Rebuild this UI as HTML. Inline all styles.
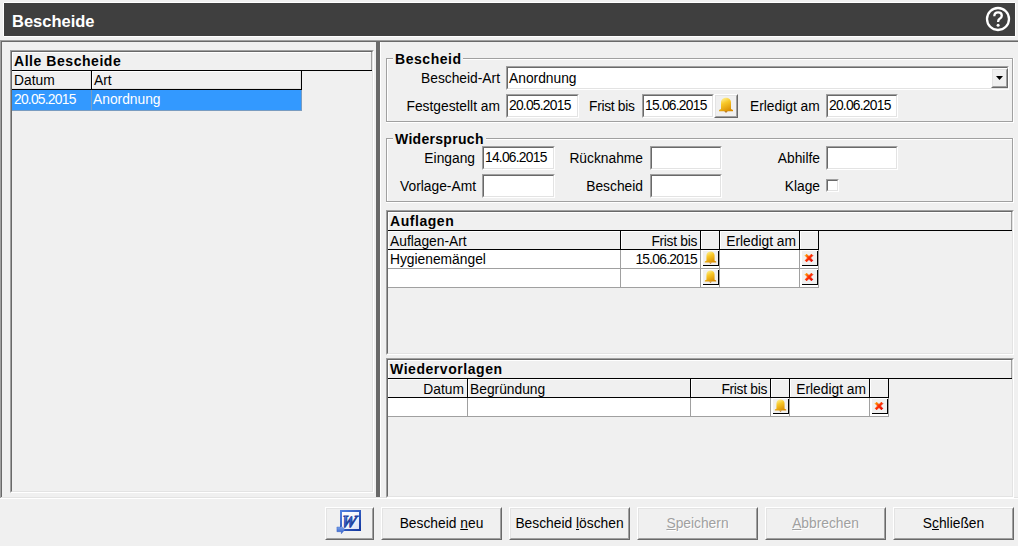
<!DOCTYPE html><html><head><meta charset="utf-8"><style>
*{box-sizing:border-box;margin:0;padding:0}
html,body{width:1018px;height:546px;overflow:hidden;background:#f0f0f0;font-family:"Liberation Sans",sans-serif;font-size:13.8px;color:#000;position:relative}
.a{position:absolute}
.t{position:absolute;white-space:nowrap;line-height:15px}
.b{font-weight:bold;font-size:14px;letter-spacing:0.55px}
.d{letter-spacing:-0.75px}
.sk{position:absolute;border-style:solid;border-width:1px;border-color:#a0a0a0 #fff #fff #a0a0a0}
.sk>i{position:absolute;left:0;top:0;right:0;bottom:0;border-style:solid;border-width:1px;border-color:#696969 #e3e3e3 #e3e3e3 #696969}
.rs{position:absolute;border-style:solid;border-width:1px;border-color:#fff #696969 #696969 #fff}
.rs>i{position:absolute;left:0;top:0;right:0;bottom:0;border-style:solid;border-width:1px;border-color:#e3e3e3 #a0a0a0 #a0a0a0 #e3e3e3}
.dis{color:#a0a0a0;text-shadow:1px 1px 0 #fff}
u{text-decoration:underline;text-underline-offset:0.5px;text-decoration-thickness:1px}
</style></head><body>
<div class="a" style="left:4px;top:2px;width:1011px;height:35px;background:#fff;"></div>
<div class="a" style="left:3px;top:3px;width:1013px;height:33px;background:#fff;"></div>
<div class="a" style="left:4px;top:3px;width:1011px;height:33px;background:#3f3f3f;"></div>
<div class="t " style="left:12px;top:11px;font-weight:bold;font-size:16.5px;line-height:20px;color:#fff">Bescheide</div>
<svg class="a" style="left:984px;top:5px" width="28" height="28" viewBox="0 0 28 28"><circle cx="14" cy="14" r="11" fill="none" stroke="#fff" stroke-width="2.3"/><path d="M10.3 11.2C10.3 8.6 12 7.4 14.1 7.4C16.3 7.4 17.8 8.8 17.8 10.7C17.8 12.5 16.6 13.2 15.4 14C14.4 14.7 14.1 15.3 14.1 17" fill="none" stroke="#fff" stroke-width="2.3"/><circle cx="14.1" cy="20.2" r="1.5" fill="#fff"/></svg>
<div class="a" style="left:0px;top:40px;width:1018px;height:1px;background:#a0a0a0;"></div>
<div class="a" style="left:0px;top:40px;width:1px;height:458px;background:#a0a0a0;"></div>
<div class="a" style="left:1px;top:41px;width:1017px;height:1px;background:#696969;"></div>
<div class="a" style="left:1px;top:41px;width:1px;height:456px;background:#696969;"></div>
<div class="a" style="left:0px;top:498px;width:1018px;height:1px;background:#fff;"></div>
<div class="a" style="left:1px;top:497px;width:1017px;height:1px;background:#e3e3e3;"></div>
<div class="a" style="left:376px;top:42px;width:4px;height:455px;background:#696969;"></div>
<div class="a" style="left:380px;top:42px;width:1px;height:455px;background:#fff;"></div>
<div class="sk" style="left:10px;top:50px;width:364px;height:443px;background:#f0f0f0"><i></i></div>
<div class="a" style="left:12px;top:52px;width:360px;height:1px;background:#fff;"></div>
<div class="a" style="left:12px;top:52px;width:1px;height:18px;background:#fff;"></div>
<div class="a" style="left:371px;top:52px;width:1px;height:18px;background:#a0a0a0;"></div>
<div class="t b" style="left:14px;top:54px;">Alle Bescheide</div>
<div class="a" style="left:12px;top:70px;width:360px;height:1px;background:#000;"></div>
<div class="a" style="left:12px;top:71px;width:290px;height:18px;background:#f0f0f0;"></div>
<div class="a" style="left:12px;top:71px;width:289px;height:1px;background:#fff;"></div>
<div class="a" style="left:92px;top:71px;width:1px;height:18px;background:#fff;"></div>
<div class="a" style="left:12px;top:88px;width:289px;height:1px;background:#e3e3e3;"></div>
<div class="a" style="left:90px;top:71px;width:1px;height:18px;background:#e3e3e3;"></div>
<div class="a" style="left:300px;top:71px;width:1px;height:18px;background:#e3e3e3;"></div>
<div class="a" style="left:12px;top:89px;width:290px;height:1px;background:#000;"></div>
<div class="a" style="left:91px;top:71px;width:1px;height:19px;background:#000;"></div>
<div class="a" style="left:301px;top:71px;width:1px;height:19px;background:#000;"></div>
<div class="t " style="left:14px;top:73px;">Datum</div>
<div class="t " style="left:94px;top:73px;">Art</div>
<div class="a" style="left:12px;top:90px;width:290px;height:21px;background:#3399ff;"></div>
<div class="a" style="left:91px;top:90px;width:1px;height:21px;background:#7a9cc0;"></div>
<div class="a" style="left:301px;top:90px;width:1px;height:21px;background:#7a9cc0;"></div>
<div class="a" style="left:12px;top:110px;width:290px;height:1px;background:#7a9cc0;"></div>
<div class="t d" style="left:14px;top:92px;color:#fff">20.05.2015</div>
<div class="t " style="left:93px;top:92px;color:#fff">Anordnung</div>
<div class="a" style="left:387px;top:59px;width:627px;height:1px;background:#fff;"></div>
<div class="a" style="left:387px;top:59px;width:1px;height:64px;background:#fff;"></div>
<div class="a" style="left:1013px;top:58px;width:1px;height:65px;background:#fff;"></div>
<div class="a" style="left:386px;top:122px;width:628px;height:1px;background:#fff;"></div>
<div class="a" style="left:386px;top:58px;width:627px;height:1px;background:#a0a0a0;"></div>
<div class="a" style="left:386px;top:58px;width:1px;height:64px;background:#a0a0a0;"></div>
<div class="a" style="left:1012px;top:58px;width:1px;height:64px;background:#a0a0a0;"></div>
<div class="a" style="left:386px;top:121px;width:627px;height:1px;background:#a0a0a0;"></div>
<div class="a" style="left:393px;top:58px;width:70px;height:2px;background:#f0f0f0;"></div>
<div class="t b" style="left:395px;top:52px;">Bescheid</div>
<div class="t " style="right:518px;top:71px;text-align:right;">Bescheid-Art</div>
<div class="sk" style="left:506px;top:66px;width:503px;height:24px;background:#fff"><i></i></div>
<div class="t " style="left:509px;top:71px;">Anordnung</div>
<div class="rs" style="left:991px;top:68px;width:17px;height:20px;background:#f0f0f0"><i></i></div>
<svg class="a" style="left:995px;top:75px" width="9" height="6"><path d="M1 1H8L4.5 5Z" fill="#000"/></svg>
<div class="t " style="right:518px;top:99px;text-align:right;">Festgestellt am</div>
<div class="sk" style="left:506px;top:94px;width:73px;height:24px;background:#fff"><i></i></div>
<div class="t d" style="left:509px;top:98px;">20.05.2015</div>
<div class="t " style="left:589px;top:99px;letter-spacing:-0.3px">Frist bis</div>
<div class="sk" style="left:642px;top:94px;width:72px;height:24px;background:#fff"><i></i></div>
<div class="t d" style="left:645px;top:98px;">15.06.2015</div>
<div class="rs" style="left:714px;top:94px;width:24px;height:24px;background:#f0f0f0"><i></i></div>
<svg class="a" style="left:718px;top:97px" width="16" height="16" viewBox="0 0 16 16"><defs><linearGradient id="bg0" x1="0.2" y1="0" x2="0.7" y2="1"><stop offset="0" stop-color="#fff4a0"/><stop offset="0.4" stop-color="#f8c828"/><stop offset="1" stop-color="#d98c00"/></linearGradient></defs><path d="M6.2 14H9.8L8 16Z" fill="#b87a30"/><path d="M3 12V5.6C3 2.6 5.2 0.7 8 0.7C10.8 0.7 13 2.6 13 5.6V12L15 12.9V14.2H1V12.9Z" fill="url(#bg0)"/></svg>
<div class="t " style="left:750px;top:99px;">Erledigt am</div>
<div class="sk" style="left:826px;top:94px;width:72px;height:24px;background:#fff"><i></i></div>
<div class="t d" style="left:829px;top:98px;">20.06.2015</div>
<div class="a" style="left:387px;top:139px;width:627px;height:1px;background:#fff;"></div>
<div class="a" style="left:387px;top:139px;width:1px;height:64px;background:#fff;"></div>
<div class="a" style="left:1013px;top:138px;width:1px;height:65px;background:#fff;"></div>
<div class="a" style="left:386px;top:202px;width:628px;height:1px;background:#fff;"></div>
<div class="a" style="left:386px;top:138px;width:627px;height:1px;background:#a0a0a0;"></div>
<div class="a" style="left:386px;top:138px;width:1px;height:64px;background:#a0a0a0;"></div>
<div class="a" style="left:1012px;top:138px;width:1px;height:64px;background:#a0a0a0;"></div>
<div class="a" style="left:386px;top:201px;width:627px;height:1px;background:#a0a0a0;"></div>
<div class="a" style="left:393px;top:138px;width:93px;height:2px;background:#f0f0f0;"></div>
<div class="t b" style="left:395px;top:132px;letter-spacing:0.3px">Widerspruch</div>
<div class="t " style="right:543px;top:151px;text-align:right;">Eingang</div>
<div class="sk" style="left:482px;top:146px;width:73px;height:24px;background:#fff"><i></i></div>
<div class="t d" style="left:485px;top:150px;">14.06.2015</div>
<div class="t " style="right:375px;top:151px;text-align:right;">Rücknahme</div>
<div class="sk" style="left:650px;top:146px;width:72px;height:24px;background:#fff"><i></i></div>
<div class="t " style="right:198px;top:151px;text-align:right;">Abhilfe</div>
<div class="sk" style="left:826px;top:146px;width:72px;height:24px;background:#fff"><i></i></div>
<div class="t " style="right:542px;top:179px;text-align:right;">Vorlage-Amt</div>
<div class="sk" style="left:482px;top:174px;width:73px;height:24px;background:#fff"><i></i></div>
<div class="t " style="right:375px;top:179px;text-align:right;">Bescheid</div>
<div class="sk" style="left:650px;top:174px;width:72px;height:24px;background:#fff"><i></i></div>
<div class="t " style="right:198px;top:179px;text-align:right;">Klage</div>
<div class="sk" style="left:826px;top:179px;width:13px;height:13px;background:#fff"><i></i></div>
<div class="sk" style="left:386px;top:210px;width:628px;height:145px;background:#f0f0f0"><i></i></div>
<div class="a" style="left:388px;top:212px;width:624px;height:1px;background:#fff;"></div>
<div class="a" style="left:388px;top:212px;width:1px;height:18px;background:#fff;"></div>
<div class="a" style="left:1011px;top:212px;width:1px;height:18px;background:#a0a0a0;"></div>
<div class="t b" style="left:390px;top:214px;">Auflagen</div>
<div class="a" style="left:388px;top:230px;width:624px;height:1px;background:#000;"></div>
<div class="a" style="left:388px;top:231px;width:232px;height:18px;background:#f0f0f0;"></div>
<div class="a" style="left:388px;top:231px;width:232px;height:1px;background:#fff;"></div>
<div class="a" style="left:388px;top:231px;width:1px;height:18px;background:#fff;"></div>
<div class="a" style="left:621px;top:231px;width:79px;height:18px;background:#f0f0f0;"></div>
<div class="a" style="left:621px;top:231px;width:79px;height:1px;background:#fff;"></div>
<div class="a" style="left:621px;top:231px;width:1px;height:18px;background:#fff;"></div>
<div class="a" style="left:701px;top:231px;width:18px;height:18px;background:#f0f0f0;"></div>
<div class="a" style="left:701px;top:231px;width:18px;height:1px;background:#fff;"></div>
<div class="a" style="left:701px;top:231px;width:1px;height:18px;background:#fff;"></div>
<div class="a" style="left:720px;top:231px;width:79px;height:18px;background:#f0f0f0;"></div>
<div class="a" style="left:720px;top:231px;width:79px;height:1px;background:#fff;"></div>
<div class="a" style="left:720px;top:231px;width:1px;height:18px;background:#fff;"></div>
<div class="a" style="left:800px;top:231px;width:18px;height:18px;background:#f0f0f0;"></div>
<div class="a" style="left:800px;top:231px;width:18px;height:1px;background:#fff;"></div>
<div class="a" style="left:800px;top:231px;width:1px;height:18px;background:#fff;"></div>
<div class="a" style="left:620px;top:231px;width:1px;height:19px;background:#000;"></div>
<div class="t " style="left:390px;top:234px;">Auflagen-Art</div>
<div class="a" style="left:700px;top:231px;width:1px;height:19px;background:#000;"></div>
<div class="t " style="right:321px;top:234px;text-align:right;letter-spacing:-0.3px">Frist bis</div>
<div class="a" style="left:719px;top:231px;width:1px;height:19px;background:#000;"></div>
<div class="a" style="left:799px;top:231px;width:1px;height:19px;background:#000;"></div>
<div class="t " style="right:222px;top:234px;text-align:right;">Erledigt am</div>
<div class="a" style="left:818px;top:231px;width:1px;height:19px;background:#000;"></div>
<div class="a" style="left:388px;top:249px;width:431px;height:1px;background:#000;"></div>
<div class="a" style="left:388px;top:250px;width:430px;height:18px;background:#fff;"></div>
<div class="a" style="left:620px;top:250px;width:1px;height:19px;background:#a0a0a0;"></div>
<div class="t " style="left:390px;top:252px;">Hygienemängel</div>
<div class="a" style="left:700px;top:250px;width:1px;height:19px;background:#a0a0a0;"></div>
<div class="t d" style="right:321px;top:252px;text-align:right;">15.06.2015</div>
<div class="a" style="left:719px;top:250px;width:1px;height:19px;background:#a0a0a0;"></div>
<div class="a" style="left:703px;top:251px;width:16px;height:15px;background:#f0f0f0;"></div>
<div class="a" style="left:718px;top:251px;width:1px;height:15px;background:#000;"></div>
<div class="a" style="left:703px;top:265px;width:16px;height:1px;background:#000;"></div>
<svg class="a" style="left:704px;top:251px" width="13" height="13" viewBox="0 0 16 16"><defs><linearGradient id="bg1" x1="0.2" y1="0" x2="0.7" y2="1"><stop offset="0" stop-color="#fff4a0"/><stop offset="0.4" stop-color="#f8c828"/><stop offset="1" stop-color="#d98c00"/></linearGradient></defs><path d="M6.2 14H9.8L8 16Z" fill="#b87a30"/><path d="M3 12V5.6C3 2.6 5.2 0.7 8 0.7C10.8 0.7 13 2.6 13 5.6V12L15 12.9V14.2H1V12.9Z" fill="url(#bg1)"/></svg>
<div class="a" style="left:799px;top:250px;width:1px;height:19px;background:#a0a0a0;"></div>
<div class="a" style="left:818px;top:250px;width:1px;height:19px;background:#a0a0a0;"></div>
<div class="a" style="left:802px;top:251px;width:16px;height:15px;background:#f0f0f0;"></div>
<div class="a" style="left:817px;top:251px;width:1px;height:15px;background:#000;"></div>
<div class="a" style="left:802px;top:265px;width:16px;height:1px;background:#000;"></div>
<svg class="a" style="left:804px;top:253px" width="10" height="10" viewBox="0 0 10 10"><defs><linearGradient id="xg2" x1="0" y1="0" x2="1" y2="1"><stop offset="0" stop-color="#ffb000"/><stop offset="0.45" stop-color="#ff3000"/><stop offset="1" stop-color="#e00000"/></linearGradient></defs><path d="M1.2 2.6L2.6 1.2L5 3.6L7.4 1.2L8.8 2.6L6.4 5L8.8 7.4L7.4 8.8L5 6.4L2.6 8.8L1.2 7.4L3.6 5Z" fill="url(#xg2)" stroke="url(#xg2)" stroke-width="0.9" stroke-linejoin="round"/></svg>
<div class="a" style="left:388px;top:268px;width:431px;height:1px;background:#a0a0a0;"></div>
<div class="a" style="left:388px;top:269px;width:430px;height:18px;background:#fff;"></div>
<div class="a" style="left:620px;top:269px;width:1px;height:19px;background:#a0a0a0;"></div>
<div class="a" style="left:700px;top:269px;width:1px;height:19px;background:#a0a0a0;"></div>
<div class="a" style="left:719px;top:269px;width:1px;height:19px;background:#a0a0a0;"></div>
<div class="a" style="left:703px;top:270px;width:16px;height:15px;background:#f0f0f0;"></div>
<div class="a" style="left:718px;top:270px;width:1px;height:15px;background:#000;"></div>
<div class="a" style="left:703px;top:284px;width:16px;height:1px;background:#000;"></div>
<svg class="a" style="left:704px;top:270px" width="13" height="13" viewBox="0 0 16 16"><defs><linearGradient id="bg3" x1="0.2" y1="0" x2="0.7" y2="1"><stop offset="0" stop-color="#fff4a0"/><stop offset="0.4" stop-color="#f8c828"/><stop offset="1" stop-color="#d98c00"/></linearGradient></defs><path d="M6.2 14H9.8L8 16Z" fill="#b87a30"/><path d="M3 12V5.6C3 2.6 5.2 0.7 8 0.7C10.8 0.7 13 2.6 13 5.6V12L15 12.9V14.2H1V12.9Z" fill="url(#bg3)"/></svg>
<div class="a" style="left:799px;top:269px;width:1px;height:19px;background:#a0a0a0;"></div>
<div class="a" style="left:818px;top:269px;width:1px;height:19px;background:#a0a0a0;"></div>
<div class="a" style="left:802px;top:270px;width:16px;height:15px;background:#f0f0f0;"></div>
<div class="a" style="left:817px;top:270px;width:1px;height:15px;background:#000;"></div>
<div class="a" style="left:802px;top:284px;width:16px;height:1px;background:#000;"></div>
<svg class="a" style="left:804px;top:272px" width="10" height="10" viewBox="0 0 10 10"><defs><linearGradient id="xg4" x1="0" y1="0" x2="1" y2="1"><stop offset="0" stop-color="#ffb000"/><stop offset="0.45" stop-color="#ff3000"/><stop offset="1" stop-color="#e00000"/></linearGradient></defs><path d="M1.2 2.6L2.6 1.2L5 3.6L7.4 1.2L8.8 2.6L6.4 5L8.8 7.4L7.4 8.8L5 6.4L2.6 8.8L1.2 7.4L3.6 5Z" fill="url(#xg4)" stroke="url(#xg4)" stroke-width="0.9" stroke-linejoin="round"/></svg>
<div class="a" style="left:388px;top:287px;width:431px;height:1px;background:#a0a0a0;"></div>
<div class="sk" style="left:386px;top:358px;width:628px;height:140px;background:#f0f0f0"><i></i></div>
<div class="a" style="left:388px;top:360px;width:624px;height:1px;background:#fff;"></div>
<div class="a" style="left:388px;top:360px;width:1px;height:18px;background:#fff;"></div>
<div class="a" style="left:1011px;top:360px;width:1px;height:18px;background:#a0a0a0;"></div>
<div class="t b" style="left:390px;top:362px;">Wiedervorlagen</div>
<div class="a" style="left:388px;top:378px;width:624px;height:1px;background:#000;"></div>
<div class="a" style="left:388px;top:379px;width:79px;height:18px;background:#f0f0f0;"></div>
<div class="a" style="left:388px;top:379px;width:79px;height:1px;background:#fff;"></div>
<div class="a" style="left:388px;top:379px;width:1px;height:18px;background:#fff;"></div>
<div class="a" style="left:468px;top:379px;width:222px;height:18px;background:#f0f0f0;"></div>
<div class="a" style="left:468px;top:379px;width:222px;height:1px;background:#fff;"></div>
<div class="a" style="left:468px;top:379px;width:1px;height:18px;background:#fff;"></div>
<div class="a" style="left:691px;top:379px;width:79px;height:18px;background:#f0f0f0;"></div>
<div class="a" style="left:691px;top:379px;width:79px;height:1px;background:#fff;"></div>
<div class="a" style="left:691px;top:379px;width:1px;height:18px;background:#fff;"></div>
<div class="a" style="left:771px;top:379px;width:18px;height:18px;background:#f0f0f0;"></div>
<div class="a" style="left:771px;top:379px;width:18px;height:1px;background:#fff;"></div>
<div class="a" style="left:771px;top:379px;width:1px;height:18px;background:#fff;"></div>
<div class="a" style="left:790px;top:379px;width:79px;height:18px;background:#f0f0f0;"></div>
<div class="a" style="left:790px;top:379px;width:79px;height:1px;background:#fff;"></div>
<div class="a" style="left:790px;top:379px;width:1px;height:18px;background:#fff;"></div>
<div class="a" style="left:870px;top:379px;width:18px;height:18px;background:#f0f0f0;"></div>
<div class="a" style="left:870px;top:379px;width:18px;height:1px;background:#fff;"></div>
<div class="a" style="left:870px;top:379px;width:1px;height:18px;background:#fff;"></div>
<div class="a" style="left:467px;top:379px;width:1px;height:19px;background:#000;"></div>
<div class="t " style="right:554px;top:382px;text-align:right;">Datum</div>
<div class="a" style="left:690px;top:379px;width:1px;height:19px;background:#000;"></div>
<div class="t " style="left:470px;top:382px;">Begründung</div>
<div class="a" style="left:770px;top:379px;width:1px;height:19px;background:#000;"></div>
<div class="t " style="right:251px;top:382px;text-align:right;letter-spacing:-0.3px">Frist bis</div>
<div class="a" style="left:789px;top:379px;width:1px;height:19px;background:#000;"></div>
<div class="a" style="left:869px;top:379px;width:1px;height:19px;background:#000;"></div>
<div class="t " style="right:152px;top:382px;text-align:right;">Erledigt am</div>
<div class="a" style="left:888px;top:379px;width:1px;height:19px;background:#000;"></div>
<div class="a" style="left:388px;top:397px;width:501px;height:1px;background:#000;"></div>
<div class="a" style="left:388px;top:398px;width:500px;height:18px;background:#fff;"></div>
<div class="a" style="left:467px;top:398px;width:1px;height:19px;background:#a0a0a0;"></div>
<div class="a" style="left:690px;top:398px;width:1px;height:19px;background:#a0a0a0;"></div>
<div class="a" style="left:770px;top:398px;width:1px;height:19px;background:#a0a0a0;"></div>
<div class="a" style="left:789px;top:398px;width:1px;height:19px;background:#a0a0a0;"></div>
<div class="a" style="left:773px;top:399px;width:16px;height:15px;background:#f0f0f0;"></div>
<div class="a" style="left:788px;top:399px;width:1px;height:15px;background:#000;"></div>
<div class="a" style="left:773px;top:413px;width:16px;height:1px;background:#000;"></div>
<svg class="a" style="left:774px;top:399px" width="13" height="13" viewBox="0 0 16 16"><defs><linearGradient id="bg5" x1="0.2" y1="0" x2="0.7" y2="1"><stop offset="0" stop-color="#fff4a0"/><stop offset="0.4" stop-color="#f8c828"/><stop offset="1" stop-color="#d98c00"/></linearGradient></defs><path d="M6.2 14H9.8L8 16Z" fill="#b87a30"/><path d="M3 12V5.6C3 2.6 5.2 0.7 8 0.7C10.8 0.7 13 2.6 13 5.6V12L15 12.9V14.2H1V12.9Z" fill="url(#bg5)"/></svg>
<div class="a" style="left:869px;top:398px;width:1px;height:19px;background:#a0a0a0;"></div>
<div class="a" style="left:888px;top:398px;width:1px;height:19px;background:#a0a0a0;"></div>
<div class="a" style="left:872px;top:399px;width:16px;height:15px;background:#f0f0f0;"></div>
<div class="a" style="left:887px;top:399px;width:1px;height:15px;background:#000;"></div>
<div class="a" style="left:872px;top:413px;width:16px;height:1px;background:#000;"></div>
<svg class="a" style="left:874px;top:401px" width="10" height="10" viewBox="0 0 10 10"><defs><linearGradient id="xg6" x1="0" y1="0" x2="1" y2="1"><stop offset="0" stop-color="#ffb000"/><stop offset="0.45" stop-color="#ff3000"/><stop offset="1" stop-color="#e00000"/></linearGradient></defs><path d="M1.2 2.6L2.6 1.2L5 3.6L7.4 1.2L8.8 2.6L6.4 5L8.8 7.4L7.4 8.8L5 6.4L2.6 8.8L1.2 7.4L3.6 5Z" fill="url(#xg6)" stroke="url(#xg6)" stroke-width="0.9" stroke-linejoin="round"/></svg>
<div class="a" style="left:388px;top:416px;width:501px;height:1px;background:#a0a0a0;"></div>
<div class="rs" style="left:325px;top:507px;width:49px;height:33px;background:#f0f0f0"><i></i></div>
<svg class="a" style="left:334px;top:508px" width="30" height="28" viewBox="0 0 30 28">
<defs><linearGradient id="wbg" x1="0" y1="0" x2="1" y2="1"><stop offset="0" stop-color="#ffffff"/><stop offset="0.5" stop-color="#f4f6fc"/><stop offset="1" stop-color="#d4dcf2"/></linearGradient>
<linearGradient id="wf" x1="0" y1="0" x2="0.4" y2="1"><stop offset="0" stop-color="#8fb0f0"/><stop offset="0.5" stop-color="#3a6ad8"/><stop offset="1" stop-color="#1a3ea8"/></linearGradient>
<linearGradient id="wfr" x1="0" y1="0" x2="1" y2="1"><stop offset="0" stop-color="#5080e0"/><stop offset="1" stop-color="#1438a0"/></linearGradient>
<linearGradient id="war" x1="0" y1="0" x2="0" y2="1"><stop offset="0" stop-color="#8ab0f0"/><stop offset="1" stop-color="#2a58c8"/></linearGradient></defs>
<rect x="7" y="3" width="19" height="19" fill="url(#wbg)" stroke="url(#wfr)" stroke-width="2"/>
<text x="16.8" y="18.6" text-anchor="middle" font-family="Liberation Serif" font-weight="bold" font-style="italic" font-size="17" fill="url(#wf)" stroke="#1c3c98" stroke-width="0.8" transform="translate(0.6 0) skewX(-10)">W</text>
<path d="M2.9 19H7V17.9L11 21.4L7.3 25.8V23.7H2.9Z" fill="url(#war)" stroke="#2a55c0" stroke-width="0.4"/>
</svg>
<div class="rs" style="left:381px;top:507px;width:121px;height:33px;background:#f0f0f0"><i></i><div class="t " style="left:0;right:0;top:8px;text-align:center">Bescheid <u>n</u>eu</div></div>
<div class="rs" style="left:509px;top:507px;width:121px;height:33px;background:#f0f0f0"><i></i><div class="t " style="left:0;right:0;top:8px;text-align:center">Bescheid <u>l</u>öschen</div></div>
<div class="rs" style="left:637px;top:507px;width:121px;height:33px;background:#f0f0f0"><i></i><div class="t dis" style="left:0;right:0;top:8px;text-align:center"><u>S</u>peichern</div></div>
<div class="rs" style="left:765px;top:507px;width:121px;height:33px;background:#f0f0f0"><i></i><div class="t dis" style="left:0;right:0;top:8px;text-align:center"><u>A</u>bbrechen</div></div>
<div class="rs" style="left:893px;top:507px;width:121px;height:33px;background:#f0f0f0"><i></i><div class="t " style="left:0;right:0;top:8px;text-align:center">S<u>c</u>hließen</div></div>
</body></html>
